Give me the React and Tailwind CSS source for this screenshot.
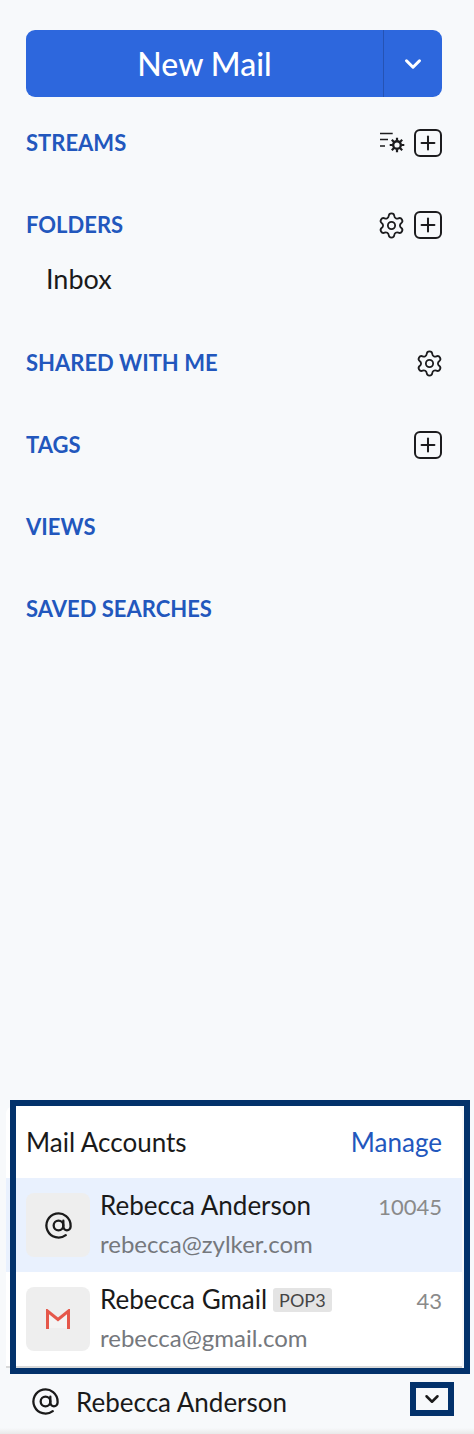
import { AtSign, ChevronDown, Plus, Settings } from 'lucide-react';

const font = { fontFamily: 'Lato, sans-serif' };

function PlusBox() {
  return (
    <span className="flex h-[28px] w-[28px] items-center justify-center rounded-[6px] border-2 border-[#1c1c1e]">
      <Plus size={22} strokeWidth={2.2} className="text-[#1c1c1e]" />
    </span>
  );
}

function StreamGear() {
  return (
    <svg width="26" height="24" viewBox="0 0 26 24" fill="none" className="text-[#1c1c1e]">
      <path d="M0 2.500h12.700M0 8.500h8M0 15h5" stroke="currentColor" strokeWidth="1.7" />
      <circle cx="17" cy="14" r="3.8" stroke="currentColor" strokeWidth="2.400" />
      <path d="M17 6.700v3M17 18.300v3M9.700 14h3M21.300 14h3M11.800 8.800l2.200 2.200M20 17l2.200 2.200M22.200 8.800L20 11M14 17l-2.200 2.200" stroke="currentColor" strokeWidth="2.200" />
    </svg>
  );
}

function Section({ title, children, className = '' }) {
  return (
    <div className={`flex h-[28px] items-center justify-between ${className}`}>
      <span className="text-[22px] font-bold leading-none text-[#2257bd]">{title}</span>
      <div className="flex items-center gap-[8px]">{children}</div>
    </div>
  );
}

function Account({ icon, name, badge, email, count, active }) {
  return (
    <div className={`flex h-[94px] items-start pl-[20px] pr-[20px] pt-[15px] ${active ? 'bg-[#e9f1fe]' : 'bg-white'}`}>
      <div className="flex h-[64px] w-[64px] shrink-0 items-center justify-center rounded-[8px] bg-[#eeeeee]">{icon}</div>
      <div className="ml-[10px] min-w-0 flex-1">
        <div className="-mt-[8px] flex h-[40px] items-center justify-between">
          <div className="flex items-center">
            <span className="text-[26px] leading-none text-[#1a1a1a]">{name}</span>
            {badge && (
              <span className="ml-[6px] mt-[1px] rounded-[3px] bg-[#e4e4e4] px-[6px] py-[2px] text-[18px] leading-[20px] text-[#444444]">{badge}</span>
            )}
          </div>
          <span className="mt-[3px] text-[22px] leading-none text-[#8a8a8a]">{count}</span>
        </div>
        <div className="mt-[3px] text-[24px] leading-[32px] text-[#75787d]">{email}</div>
      </div>
    </div>
  );
}

export default function App() {
  return (
    <div style={font} className="flex h-[1434px] w-[474px] flex-col overflow-hidden bg-[#f7f9fb]">
      <div className="pl-[26px] pr-[32px] pt-[30px]">
        <div className="flex h-[67px] overflow-hidden rounded-[9px] bg-[#2d67dd] text-white">
          <div className="flex flex-1 items-center justify-center border-r border-[#2553b4] text-[32px] font-medium">New Mail</div>
          <div className="flex w-[58px] items-center justify-center">
            <ChevronDown size={26} strokeWidth={2.8} />
          </div>
        </div>

        <Section title="STREAMS" className="mt-[32px]">
          <StreamGear />
          <PlusBox />
        </Section>
        <Section title="FOLDERS" className="mt-[54px]">
          <Settings size={29} strokeWidth={1.5} className="text-[#1c1c1e]" />
          <PlusBox />
        </Section>
        <div className="mt-[24px] pl-[20px] text-[27px] leading-[32px] text-[#1a1a1a]">Inbox</div>
        <Section title="SHARED WITH ME" className="mt-[54px]">
          <Settings size={29} strokeWidth={1.5} className="-mr-[2px] text-[#1c1c1e]" />
        </Section>
        <Section title="TAGS" className="mt-[54px]">
          <PlusBox />
        </Section>
        <Section title="VIEWS" className="mt-[54px]" />
        <Section title="SAVED SEARCHES" className="mt-[54px]" />
      </div>

      <div className="flex-1" />

      {/* panel starts at x=6, the navy frame sits on top of it */}
      <div className="relative ml-[6px] mr-[12px] rounded-t-[8px] bg-white">
        <div className="flex h-[72px] items-center justify-between pl-[20px] pr-[20px]">
          <span className="text-[26px] text-[#1a1a1a]">Mail Accounts</span>
          <span className="text-[26px] text-[#2257bd]">Manage</span>
        </div>
        <Account
          active
          icon={<AtSign size={29} strokeWidth={1.9} className="text-[#1a1a1a]" />}
          name="Rebecca Anderson"
          email="rebecca@zylker.com"
          count="10045"
        />
        <Account
          icon={
            <svg width="24" height="20" viewBox="0 0 24 20" fill="none">
              <path d="M1.500 3L12 10.500 22.500 3v16h-21z" fill="#f4f4f4" />
              <path d="M1.500 20V2L12 10.500 22.500 2v18" stroke="#e5574a" strokeWidth="3" />
            </svg>
          }
          name="Rebecca Gmail"
          badge="POP3"
          email="rebecca@gmail.com"
          count="43"
        />
        <div className="h-[2px] bg-[#d9d9d9]" />
        <div className="pointer-events-none absolute -top-[6px] -bottom-[6px] left-[4px] -right-[8px] border-[6px] border-[#03326b]" />
      </div>

      <div className="flex h-[60px] items-start pl-[31px] pr-[20px] pt-[14px]">
        <span className="flex h-[38px] items-center">
          <AtSign size={29} strokeWidth={1.9} className="text-[#1a1a1a]" />
        </span>
        <span className="ml-[16px] flex h-[40px] items-center text-[26px] leading-none text-[#1a1a1a]">Rebecca Anderson</span>
        <span className="ml-auto flex h-[34px] w-[44px] items-center justify-center border-[6px] border-[#03326b]">
          <ChevronDown size={22} strokeWidth={2.7} className="shrink-0 text-[#1a1a1a]" />
        </span>
      </div>
      <div className="h-[6px] bg-gradient-to-b from-[#f7f9fb] to-[#e9e9e9]" />
    </div>
  );
}
